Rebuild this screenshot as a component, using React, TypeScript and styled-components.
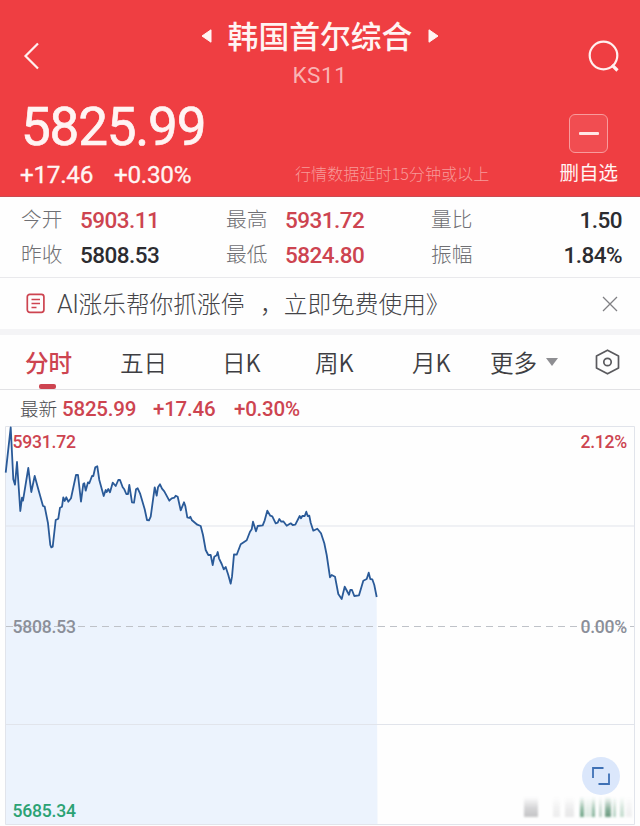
import React from 'react';
import styled, { createGlobalStyle } from 'styled-components';

const RED = '#ef3e42';
const UP = '#cd4450';
const CJK = '"Noto Sans CJK SC", sans-serif';
const NUM = 'Roboto, "Noto Sans CJK SC", sans-serif';

const GlobalStyle = createGlobalStyle`
  * { box-sizing: border-box; }
  body { margin: 0; background: #fefefe; font-family: ${CJK}; }
`;

const Screen = styled.main`
  width: 640px;
  height: 826px;
  overflow: hidden;
  display: flex;
  flex-direction: column;
  background: #fefefe;
  white-space: nowrap;
`;

const Header = styled.header`
  height: 197px;
  flex: none;
  background: ${RED};
  border-bottom: 1px solid #cb4a50;
  color: #fff4f3;
`;

const NavRow = styled.div`
  height: 90px;
  display: grid;
  grid-template-columns: 60px 1fr 60px;
  padding: 0 20px;
`;

const IconButton = styled.button<{ $top: number; $end?: boolean }>`
  border: 0;
  padding: 0;
  background: none;
  align-self: start;
  justify-self: ${(p) => (p.$end ? 'end' : 'start')};
  margin-top: ${(p) => p.$top}px;
  svg { display: block; }
`;

const TitleBlock = styled.div`
  display: flex;
  flex-direction: column;
  align-items: center;
  padding-top: 12px;
`;

const TitleLine = styled.h1`
  margin: 0;
  display: flex;
  align-items: center;
  gap: 16px;
  font-size: 30.8px;
  line-height: 46px;
  font-weight: 500;
  svg { margin-top: 2px; }
`;

const Code = styled.div`
  font: 400 22.5px/34px ${NUM};
  letter-spacing: 0.6px;
  color: #f9b3b3;
`;

const QuoteRow = styled.div`
  height: 106px;
  display: flex;
  padding: 0 22px 0 20px;
`;

const PriceBlock = styled.div`
  width: 275px;
  padding-top: 6px;
`;

const Price = styled.div`
  padding-left: 1px;
  font: 450 53px/63px ${NUM};
  -webkit-text-stroke: 0.7px currentColor;
  letter-spacing: -1.2px;
`;

const Changes = styled.div`
  display: flex;
  gap: 21px;
  font: 400 24.3px/32px ${NUM};
  -webkit-text-stroke: 0.3px currentColor;
  letter-spacing: -0.3px;
`;

const DelayNote = styled.div`
  padding-top: 70px;
  font-size: 16.1px;
  line-height: 26px;
  font-weight: 300;
  color: #f79a99;
`;

const Watch = styled.div`
  margin-left: auto;
  padding-top: 24px;
  display: flex;
  flex-direction: column;
  align-items: center;
  font-size: 19.5px;
  line-height: 37px;
`;

const WatchBox = styled.div`
  width: 39px;
  height: 39px;
  border: 1px solid #f89b9c;
  border-radius: 6px;
  background: #f14d51;
  display: grid;
  place-items: center;
  &::after {
    content: '';
    width: 20px;
    height: 3px;
    border-radius: 1px;
    background: #ffe7e6;
  }
`;

const Stats = styled.section`
  height: 81px;
  flex: none;
  padding: 4px 18px 0 21px;
  border-bottom: 1px solid #e9e9ec;
  display: grid;
  grid-template-columns: 59px 146px 59px 146px 59px 1fr;
  grid-auto-rows: 34.5px;
  line-height: 34px;
`;

const StatLabel = styled.span`
  font-size: 20.7px;
  font-weight: 300;
  color: #6f6f73;
`;

const StatValue = styled.span<{ $up?: boolean; $right?: boolean }>`
  font: 500 22.5px/38px ${NUM};
  letter-spacing: -0.55px;
  color: ${(p) => (p.$up ? UP : '#2c2c30')};
  text-align: ${(p) => (p.$right ? 'right' : 'left')};
`;

const Banner = styled.section`
  height: 51px;
  flex: none;
  display: flex;
  align-items: center;
  padding: 0 22px 0 26px;
  svg { flex: none; }
`;

const BannerText = styled.div`
  margin: -2px auto 0 11px;
  font-size: 23.7px;
  font-weight: 300;
  line-height: 50px;
  word-spacing: 10.5px;
  color: #444448;
`;

const Latin = styled.span`
  font: 300 25px ${NUM};
  letter-spacing: -0.4px;
`;

const Band = styled.div`
  height: 6px;
  flex: none;
  background: #f4f4f6;
`;

const Tabs = styled.nav`
  height: 55px;
  flex: none;
  border-bottom: 1px solid #e2e2e5;
  display: grid;
  grid-template-columns: 95px 102px 93px 97px 78px 105px 25px;
  padding-left: 25px;
  font-size: 23.6px;
  line-height: 52px;
  color: #3e3e42;
`;

const Tab = styled.span<{ $active?: boolean }>`
  display: flex;
  align-items: center;
  gap: 9px;
  font-weight: ${(p) => (p.$active ? 500 : 350)};
  color: ${(p) => (p.$active ? UP : 'inherit')};
  position: relative;
  ${(p) =>
    p.$active &&
    `&::after {
      content: '';
      position: absolute;
      left: 14px;
      bottom: 0;
      width: 17px;
      height: 5px;
      border-radius: 2px;
      background: ${UP};
    }`}
`;

const Latest = styled.div`
  height: 36px;
  flex: none;
  display: flex;
  padding-left: 20px;
  font: 500 20.5px/39px ${NUM};
  letter-spacing: -0.2px;
  color: ${UP};
`;

const LatestLabel = styled.span`
  font: 300 18.7px/36px ${CJK};
  color: #4c4c50;
  margin-right: 5px;
`;

const LatestValue = styled.span<{ $width?: number }>`
  width: ${(p) => (p.$width ? `${p.$width}px` : 'auto')};
`;

const ChartArea = styled.section`
  position: relative;
  flex: 1;
  svg { display: block; }
`;

const AxisLabel = styled.span<{ $top: number; $right?: boolean; $color: string }>`
  position: absolute;
  top: ${(p) => p.$top}px;
  ${(p) => (p.$right ? 'right: 13px;' : 'left: 12.5px;')}
  font: 500 17.6px/20px ${NUM};
  letter-spacing: -0.25px;
  color: ${(p) => p.$color};
`;

const ExpandButton = styled.button`
  position: absolute;
  left: 582px;
  top: 331px;
  width: 38px;
  height: 38px;
  padding: 0;
  border: 0;
  border-radius: 50%;
  background: #dbe7fb;
  display: grid;
  place-items: center;
`;

/* Each run lists x,y pairs in thirds of a pixel, offset from its origin. */
const runs: { x: number; y: number; d: number[] }[] = [
  {
    x: 0,
    y: -6,
    d: [17, 158, 32, 22, 40, 178, 45, 194, 51, 126, 61, 273, 66, 233, 69, 242, 85, 144, 94, 216, 104, 168, 115, 208,
      129, 258, 134, 260, 144, 310, 151, 375, 154, 382, 158, 380, 167, 300, 175, 296, 180, 263, 186, 260, 190, 232,
      194, 243, 199, 232, 205, 245, 213, 235, 228, 165, 234, 165, 243, 245, 250, 192, 253, 190, 257, 212, 264, 187,
      268, 190, 276, 168, 280, 168, 286, 142, 292, 139, 298, 180, 311, 228, 317, 210, 320, 216, 325, 207, 330, 217,
      338, 188, 347, 198, 355, 180],
  },
  {
    x: 120,
    y: 24,
    d: [0, 90, 8, 112, 13, 118, 19, 132, 24, 132, 28, 105, 36, 157, 42, 158, 48, 118, 53, 115, 60, 130, 74, 178, 81,
      210, 87, 211, 92, 200, 104, 112, 110, 137, 114, 112, 120, 103, 126, 116, 133, 124, 148, 152, 155, 145, 163, 143,
      167, 137, 173, 140, 182, 181, 192, 157, 196, 168, 202, 202, 208, 204, 211, 200, 216, 211, 232, 224, 242, 228,
      249, 255, 257, 300, 265, 315, 272, 315, 278, 345, 283, 320, 290, 316, 293, 306, 297, 325, 305, 342, 311, 358,
      317, 351, 325, 375],
  },
  {
    x: 220,
    y: 64,
    d: [32, 281, 36, 260, 42, 193, 50, 194, 62, 163, 80, 151, 90, 125, 95, 118, 99, 95, 108, 124, 113, 108, 128, 106,
      134, 91, 142, 62, 151, 77, 157, 79, 167, 100, 173, 98, 178, 87, 184, 95, 190, 94, 200, 107, 212, 100, 218, 105,
      226, 104, 239, 78, 243, 85, 247, 78, 254, 78, 259, 65, 263, 78, 268, 77, 272, 98, 280, 122, 292, 116, 303, 130,
      313, 160, 320, 195, 330, 262, 335, 255, 345, 260, 355, 312, 365, 327, 374, 290, 387, 314, 391, 300, 396, 300,
      403, 318, 417, 316, 430, 272, 440, 267, 446, 248, 451, 267, 457, 268, 463, 285, 470, 321],
  },
];

const points = runs
  .flatMap(({ x, y, d }) =>
    Array.from({ length: d.length / 2 }, (_, i) => `${(x + d[2 * i] / 3).toFixed(1)},${(y + d[2 * i + 1] / 3).toFixed(1)}`),
  )
  .join(' ');

const smears: [number, number, string, number][] = [
  [524, 14, '#8b8b8f', 0.5],
  [553, 7, '#8b8b8f', 0.15],
  [565, 9, '#8b8b8f', 0.2],
  [580, 4, '#2f7d53', 0.7],
  [585, 7, '#6aa683', 0.22],
  [592, 3, '#2f7d53', 0.6],
  [599, 3, '#5b8f73', 0.4],
  [605, 6, '#236c44', 0.7],
  [613, 3, '#2f7d53', 0.35],
  [620, 4, '#6aa683', 0.4],
  [626, 6, '#9a9a9e', 0.14],
];

function Chart() {
  return (
    <svg width="640" height="401" viewBox="0 0 640 401">
      <defs>
        {smears.map(([x, , color, o]) => (
          <linearGradient key={x} id={`smear${x}`} x1="0" y1="0" x2="0" y2="1">
            <stop offset="0" stopColor={color} stopOpacity="0" />
            <stop offset="0.6" stopColor={color} stopOpacity={o * 0.75} />
            <stop offset="1" stopColor={color} stopOpacity={o} />
          </linearGradient>
        ))}
        <filter id="soft" x="-20%" y="-20%" width="140%" height="140%">
          <feGaussianBlur stdDeviation="1 0.8" />
        </filter>
      </defs>
      <polygon points={`5.5,398 ${points} 377.5,398`} fill="#ecf3fd" />
      <g stroke="#e1e4eb" strokeWidth="1">
        <path d="M5.5 0.5H634.5V398.5H5.5Z" fill="none" />
        <path d="M6 100H634M6 298.5H634" />
      </g>
      <path d="M6 200.5H634" stroke="#bfc2c8" strokeDasharray="7 5" />
      <polyline points={points} fill="none" stroke="#2a5a98" strokeWidth="1.8" strokeLinejoin="round" />
      <g filter="url(#soft)">
        {smears.map(([x, w]) => (
          <rect key={x} x={x} y="371" width={w} height="20" fill={`url(#smear${x})`} />
        ))}
      </g>
    </svg>
  );
}

export default function App() {
  return (
    <Screen>
      <GlobalStyle />
      <Header>
        <NavRow>
          <IconButton $top={42} aria-label="返回">
            <svg width="22" height="28" viewBox="0 0 22 28" fill="none" stroke="#fff0ef" strokeWidth="2.2">
              <path d="M18 1.5L5.5 14L18 26.5" />
            </svg>
          </IconButton>
          <TitleBlock>
            <TitleLine>
              <svg width="11" height="14" viewBox="0 0 11 14">
                <path d="M10 0.8V13.2L1 7Z" fill="#fff4f3" stroke="#fff4f3" strokeLinejoin="round" />
              </svg>
              韩国首尔综合
              <svg width="11" height="14" viewBox="0 0 11 14">
                <path d="M1 0.8V13.2L10 7Z" fill="#fff4f3" stroke="#fff4f3" strokeLinejoin="round" />
              </svg>
            </TitleLine>
            <Code>KS11</Code>
          </TitleBlock>
          <IconButton $top={40} $end aria-label="搜索">
            <svg width="32" height="33" viewBox="0 0 32 33" fill="none" stroke="#fff0ef" strokeWidth="2.2">
              <circle cx="15.5" cy="15.5" r="13.8" />
              <path d="M24 25L29.5 30.5" strokeWidth="3.2" />
            </svg>
          </IconButton>
        </NavRow>
        <QuoteRow>
          <PriceBlock>
            <Price>5825.99</Price>
            <Changes>
              <span>+17.46</span>
              <span>+0.30%</span>
            </Changes>
          </PriceBlock>
          <DelayNote>行情数据延时15分钟或以上</DelayNote>
          <Watch>
            <WatchBox />
            删自选
          </Watch>
        </QuoteRow>
      </Header>

      <Stats>
        <StatLabel>今开</StatLabel>
        <StatValue $up>5903.11</StatValue>
        <StatLabel>最高</StatLabel>
        <StatValue $up>5931.72</StatValue>
        <StatLabel>量比</StatLabel>
        <StatValue $right>1.50</StatValue>
        <StatLabel>昨收</StatLabel>
        <StatValue>5808.53</StatValue>
        <StatLabel>最低</StatLabel>
        <StatValue $up>5824.80</StatValue>
        <StatLabel>振幅</StatLabel>
        <StatValue $right>1.84%</StatValue>
      </Stats>

      <Banner>
        <svg width="20" height="21" viewBox="0 0 20 21" fill="none" stroke={UP} strokeWidth="1.7">
          <rect x="1.3" y="1.3" width="16.6" height="18" rx="2.5" />
          <path d="M5.5 6.5H14M5.5 10.5H14M5.5 14.5H10.5" />
        </svg>
        <BannerText>
          <Latin>AI</Latin>涨乐帮你抓涨停 ，立即免费使用》
        </BannerText>
        <svg width="16" height="16" viewBox="0 0 16 16" stroke="#808084" strokeWidth="1.3">
          <path d="M1 1L15 15M15 1L1 15" />
        </svg>
      </Banner>
      <Band />

      <Tabs>
        <Tab $active>分时</Tab>
        <Tab>五日</Tab>
        <Tab>日K</Tab>
        <Tab>周K</Tab>
        <Tab>月K</Tab>
        <Tab>
          更多
          <svg width="12" height="8" viewBox="0 0 12 8">
            <path d="M0 0H12L6 8Z" fill="#8e8e92" />
          </svg>
        </Tab>
        <Tab>
          <svg width="25" height="26" viewBox="0 0 25 26" fill="none" stroke="#5a5a5e" strokeWidth="1.7" strokeLinejoin="round">
            <path d="M12.5 1.2L23.5 7V19L12.5 24.8L1.5 19V7Z" />
            <circle cx="12.5" cy="13" r="3.7" />
          </svg>
        </Tab>
      </Tabs>

      <Latest>
        <LatestLabel>最新</LatestLabel>
        <LatestValue $width={91}>5825.99</LatestValue>
        <LatestValue $width={81}>+17.46</LatestValue>
        <LatestValue>+0.30%</LatestValue>
      </Latest>

      <ChartArea>
        <Chart />
        <AxisLabel $top={6} $color={UP}>5931.72</AxisLabel>
        <AxisLabel $top={6} $right $color={UP}>2.12%</AxisLabel>
        <AxisLabel $top={191} $color="#8b8f99">5808.53</AxisLabel>
        <AxisLabel $top={191} $right $color="#8b8f99">0.00%</AxisLabel>
        <AxisLabel $top={375} $color="#2ba274">5685.34</AxisLabel>
        <ExpandButton aria-label="全屏">
          <svg width="20" height="20" viewBox="0 0 20 20" fill="none" stroke="#3f71b5" strokeWidth="1.8">
            <path d="M2 12V2H12.5M18 7.5V18H7.5" />
          </svg>
        </ExpandButton>
      </ChartArea>
    </Screen>
  );
}
